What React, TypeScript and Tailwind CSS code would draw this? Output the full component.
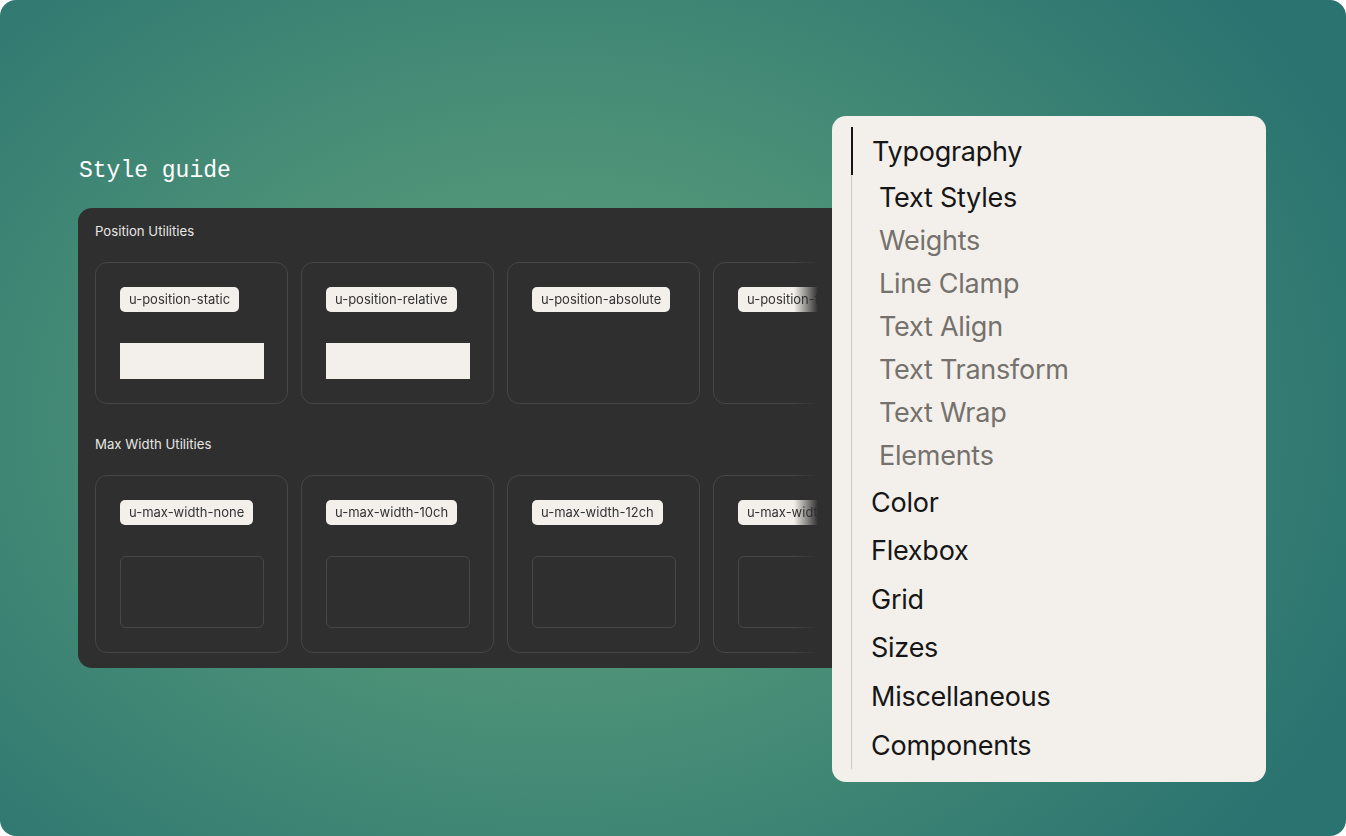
import React from "react";

const positionCards = [
  { tag: "u-position-static", box: true },
  { tag: "u-position-relative", box: true },
  { tag: "u-position-absolute", box: false },
  { tag: "u-position-fixed", box: false },
];

const maxWidthCards = ["u-max-width-none", "u-max-width-10ch", "u-max-width-12ch", "u-max-width-15ch"];

const subItems = ["Text Styles", "Weights", "Line Clamp", "Text Align", "Text Transform", "Text Wrap", "Elements"];
const topItems = ["Color", "Flexbox", "Grid", "Sizes", "Miscellaneous", "Components"];

function Tag({ label }: { label: string }) {
  return (
    <span className="inline-flex h-[25px] items-center rounded-[5px] bg-[#f3f0eb] px-[9px] text-[13px] whitespace-nowrap text-[#333333]">
      {label}
    </span>
  );
}

function CardRow({ children }: { children: React.ReactNode }) {
  return (
    <div className="flex w-[723px] gap-[13px] overflow-hidden [mask-image:linear-gradient(to_right,black_calc(100%-24px),transparent)]">
      {children}
    </div>
  );
}

export default function App() {
  return (
    <div className="flex h-[836px] w-[1346px] items-start overflow-hidden rounded-[16px] bg-[radial-gradient(ellipse_65%_80%_at_41%_50%,#5c9f7c_0%,#4f9478_35%,#2a7370_100%)] pl-[78px] pt-[116px] font-['Inter',sans-serif]">
      {/* left column */}
      <div className="w-[754px] pt-[41px]">
        <h1 className="mb-[23px] h-[28px] pl-px font-['Liberation_Mono',monospace] text-[23px] leading-[28px] text-white">
          Style guide
        </h1>
        <div className="flex flex-col gap-[32px] rounded-l-[14px] bg-[#2f2f2f] pb-[15px] pl-[17px] pt-[15px]">
          <section>
            <div className="mb-[23px] text-[13.2px] leading-[16px] text-[#e8e6e3]">Position Utilities</div>
            <CardRow>
              {positionCards.map((c) => (
                <div
                  key={c.tag}
                  className="flex h-[142px] w-[193px] shrink-0 flex-col items-start rounded-[12px] border border-[#464646] px-[24px] pt-[24px]"
                >
                  <Tag label={c.tag} />
                  {c.box && <div className="mt-[31px] h-[36px] w-[144px] bg-[#f3f0eb]" />}
                </div>
              ))}
            </CardRow>
          </section>
          <section>
            <div className="mb-[23px] text-[13.2px] leading-[16px] text-[#e8e6e3]">Max Width Utilities</div>
            <CardRow>
              {maxWidthCards.map((t) => (
                <div
                  key={t}
                  className="flex h-[178px] w-[193px] shrink-0 flex-col items-start rounded-[12px] border border-[#464646] px-[24px] pt-[24px]"
                >
                  <Tag label={t} />
                  <div className="mt-[31px] h-[72px] w-[144px] rounded-[6px] border border-[#474747]" />
                </div>
              ))}
            </CardRow>
          </section>
        </div>
      </div>

      {/* nav panel */}
      <div className="h-[666px] w-[434px] shrink-0 rounded-[14px] bg-[#f3f0eb] pl-[19px] pt-[11px]">
        <ul className="border-l border-[#cdc9c2] text-[27px] tracking-[-0.25px]">
          <li className="relative flex h-[48px] items-center pl-[20px] pt-[3px] text-[#161616]">
            <span className="absolute -left-px top-0 h-full w-[2px] bg-[#161616]" />
            Typography
          </li>
          {subItems.map((s, i) => (
            <li
              key={s}
              className={
                i === 0
                  ? "flex h-[43px] items-center pl-[27px] pt-[3px] text-[#161616]"
                  : "flex h-[43px] items-center pl-[27px] pt-[3px] text-[#75716c]"
              }
            >
              {s}
            </li>
          ))}
          <li className="h-[1px]" />
          {topItems.map((t) => (
            <li key={t} className="flex h-[48.6px] items-center pl-[19px] pt-[3px] text-[#161616]">
              {t}
            </li>
          ))}
        </ul>
      </div>
    </div>
  );
}
